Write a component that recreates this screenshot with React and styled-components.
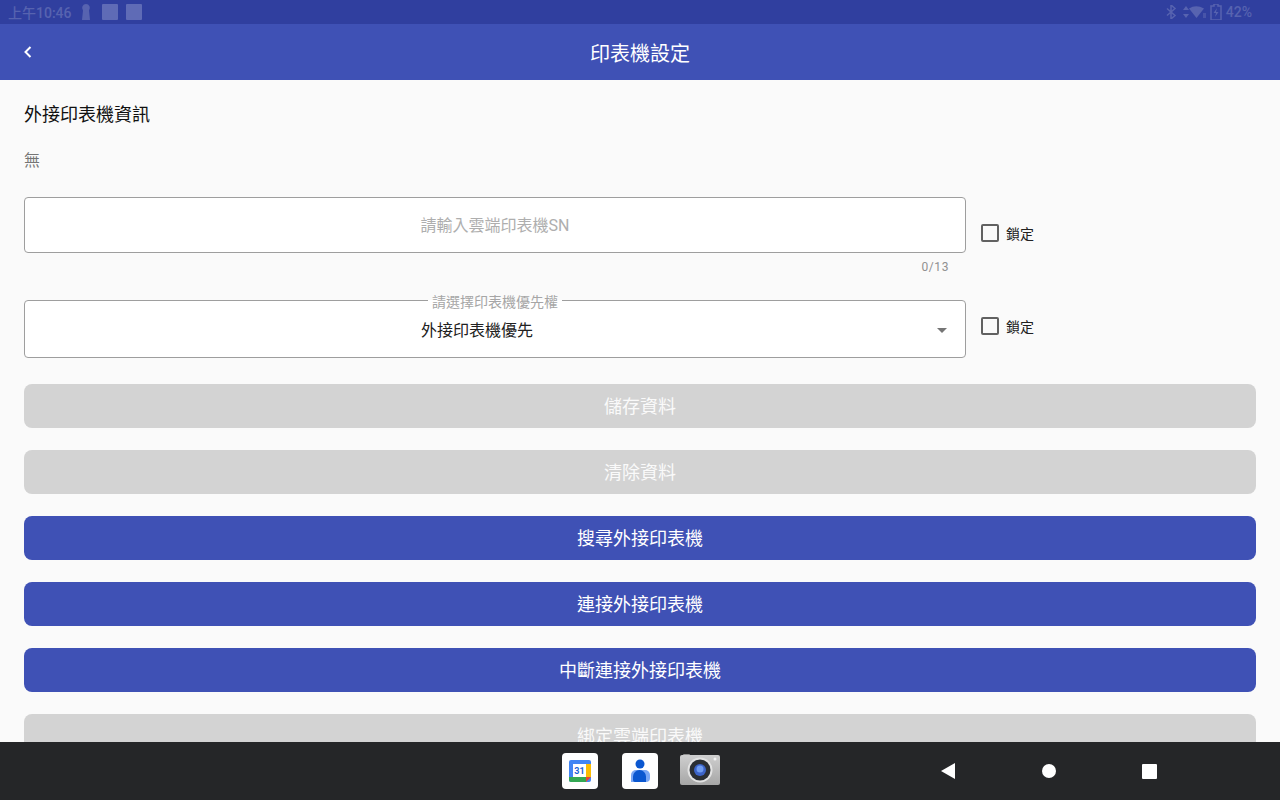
import React from 'react';
import styled, { createGlobalStyle } from 'styled-components';

const FONT = '"Roboto", "Noto Sans CJK TC", "Noto Sans", sans-serif';

const GlobalStyle = createGlobalStyle`
  html, body {
    margin: 0;
    padding: 0;
    width: 100%;
    height: 100%;
    overflow: hidden;
    font-family: ${FONT};
  }
  * {
    box-sizing: border-box;
  }
`;

const Screen = styled.div`
  width: 1280px;
  height: 800px;
  display: flex;
  flex-direction: column;
  overflow: hidden;
  background-color: #fafafa;
`;

const StatusBar = styled.div`
  height: 24px;
  flex-shrink: 0;
  display: flex;
  align-items: center;
  justify-content: space-between;
  padding: 0 28px 0 8px;
  background-color: #303f9f;
  color: #5763b0;
  font-size: 14px;
  font-weight: 500;
`;

const StatusGroup = styled.div`
  display: flex;
  align-items: center;
  gap: ${props => props.$gap || 0}px;
`;

const StatusSquare = styled.div`
  width: 16px;
  height: 16px;
  border-radius: 1px;
  background-color: #5f6bb6;
`;

const StatusIcon = styled.svg`
  margin-left: ${props => props.$left || 0}px;
  margin-right: ${props => props.$right || 0}px;
`;

const Battery = styled.span`
  margin-left: 4px;
  font-size: 14px;
`;

const Header = styled.header`
  position: relative;
  height: 56px;
  flex-shrink: 0;
  display: flex;
  align-items: center;
  justify-content: center;
  background-color: #3f51b5;
  color: #ffffff;
  font-size: 20px;
`;

const BackButton = styled.button`
  position: absolute;
  left: 22px;
  top: 21px;
  width: 12px;
  height: 14px;
  padding: 0;
  border: none;
  background: transparent;
  display: flex;
`;

const Content = styled.main`
  flex: 1;
  min-height: 0;
  overflow: hidden;
  padding: 0 24px;
  display: flex;
  flex-direction: column;
`;

const Title = styled.div`
  margin-top: 22px;
  height: 26px;
  line-height: 26px;
  font-size: 18px;
  color: #111111;
`;

const Value = styled.div`
  margin-top: 21px;
  height: 24px;
  line-height: 24px;
  font-size: 16px;
  color: #757575;
`;

const FieldRow = styled.div`
  display: flex;
  align-items: flex-start;
  margin-top: ${props => props.$top}px;
`;

const FieldBox = styled.div`
  position: relative;
  width: 942px;
  height: ${props => props.$height}px;
  padding-bottom: ${props => props.$muted ? 2 : 0}px;
  padding-right: ${props => props.$muted ? 0 : 36}px;
  display: flex;
  align-items: center;
  justify-content: center;
  background-color: #ffffff;
  border: 1px solid #9e9e9e;
  border-radius: 4px;
  font-size: 16px;
  color: ${props => props.$muted ? '#aeaeae' : '#212121'};
`;

const LegendLabel = styled.span`
  position: absolute;
  left: 403px;
  top: -7px;
  padding: 0 4px;
  line-height: 16px;
  font-size: 14px;
  color: #a6a6a6;
  background: linear-gradient(#fafafa 0 6px, #ffffff 6px);
`;

const Caret = styled.span`
  position: absolute;
  right: 18px;
  top: 27px;
  width: 0;
  height: 0;
  border-left: 5px solid transparent;
  border-right: 5px solid transparent;
  border-top: 5px solid #757575;
`;

const Counter = styled.div`
  width: 925px;
  height: 14px;
  margin-top: 7px;
  line-height: 14px;
  text-align: right;
  font-size: 12px;
  letter-spacing: 0.6px;
  color: #909090;
`;

const LockLabel = styled.label`
  display: flex;
  align-items: center;
  gap: 7px;
  margin-left: 15px;
  margin-top: ${props => props.$top}px;
  font-size: 14px;
  color: #212121;
`;

const CheckBox = styled.span`
  width: 18px;
  height: 18px;
  border: 2px solid #616161;
  border-radius: 2px;
`;

const ButtonStack = styled.div`
  margin-top: 26px;
  display: flex;
  flex-direction: column;
  gap: 22px;
  flex-shrink: 0;
`;

const ActionButton = styled.button`
  width: 100%;
  height: 44px;
  flex-shrink: 0;
  padding: 0 0 2px;
  border: none;
  border-radius: 8px;
  background-color: ${props => props.disabled ? '#d3d3d3' : '#3f51b5'};
  color: ${props => props.disabled ? '#fafafa' : '#ffffff'};
  font-family: ${FONT};
  font-size: 18px;
`;

const NavBar = styled.nav`
  position: relative;
  height: 58px;
  flex-shrink: 0;
  background-color: #252628;
`;

const Dock = styled.div`
  position: absolute;
  left: 562px;
  top: 11px;
  display: flex;
  gap: 24px;
  align-items: flex-start;
`;

const AppTile = styled.div`
  width: 36px;
  height: 36px;
  border-radius: 4px;
  background-color: #ffffff;
  display: flex;
  align-items: center;
  justify-content: center;
`;

const CameraSvg = styled.svg`
  margin-left: -2px;
  margin-top: 1px;
`;

const CalendarDay = styled.text`
  font-family: "Roboto", sans-serif;
  font-size: 9px;
  font-weight: 700;
  fill: #1a63d8;
`;

const NavButtons = styled.div`
  position: absolute;
  left: 940px;
  top: 20px;
  width: 217px;
  height: 18px;
  display: flex;
  align-items: center;
  justify-content: space-between;
`;

const NavCircle = styled.div`
  width: 14px;
  height: 14px;
  border-radius: 50%;
  background-color: #ffffff;
`;

const NavSquare = styled.div`
  width: 15px;
  height: 15px;
  border-radius: 1px;
  background-color: #ffffff;
`;

const CalendarIcon = () => (
  <svg width="22" height="22" viewBox="0 0 22 22">
    <rect x="0" y="0" width="22" height="22" rx="2" fill="#4285f4" />
    <rect x="4" y="4" width="13" height="13" fill="#ffffff" />
    <rect x="17" y="4" width="5" height="13" fill="#fbbc04" />
    <path d="M0 17h17v5H2a2 2 0 0 1-2-2z" fill="#34a853" />
    <path d="M17 17h5l-5 5z" fill="#ea4335" />
    <CalendarDay x="10.500" y="14" textAnchor="middle">31</CalendarDay>
  </svg>
);

const ContactIcon = () => (
  <svg width="20" height="24" viewBox="0 0 20 24">
    <circle cx="10" cy="5" r="4.500" fill="#0b57d0" />
    <path d="M6 11h9a5 5 0 0 1 5 5v3a4 4 0 0 1-4 4H1v-7a5 5 0 0 1 5-5z" fill="#7aa7f5" />
    <path d="M9.500 11a6.500 6.500 0 0 1 6.500 6.500V23H5a2 2 0 0 1-2-2v-3.500a6.500 6.500 0 0 1 6.500-6.500z" fill="#0b57d0" />
  </svg>
);

const CameraIcon = () => (
  <CameraSvg width="40" height="31" viewBox="0 0 40 31">
    <defs>
      <linearGradient id="cameraBody" x1="0" y1="0" x2="0" y2="1">
        <stop offset="0" stopColor="#cfcfcf" />
        <stop offset="1" stopColor="#a6a6a6" />
      </linearGradient>
    </defs>
    <rect x="3" y="0" width="7" height="3" rx="1" fill="#8f8f8f" />
    <rect x="0" y="1" width="40" height="30" rx="2" fill="url(#cameraBody)" />
    <circle cx="20" cy="16" r="12.500" fill="#e3e3e3" />
    <circle cx="20" cy="16" r="10.500" fill="#2b2f33" />
    <circle cx="20" cy="16" r="6" fill="#3c64c8" />
    <circle cx="20" cy="15" r="3.500" fill="#6f9cf0" />
    <circle cx="35" cy="5" r="1.500" fill="#f2f2f2" />
  </CameraSvg>
);

const App = () => {
  return (
    <Screen>
      <GlobalStyle />
      <StatusBar>
        <StatusGroup $gap={8}>
          <span>上午10:46</span>
          <StatusIcon $right={2} width="12" height="16" viewBox="0 0 12 16">
            <path d="M6 0a4 4 0 0 1 3 6.500L10 16H2l1-9.500A4 4 0 0 1 6 0z" fill="#5763b0" />
          </StatusIcon>
          <StatusSquare />
          <StatusSquare />
        </StatusGroup>
        <StatusGroup>
          <StatusIcon width="12" height="14" viewBox="0 0 12 14">
            <path d="M2 3.500l8 7L6 14V0l4 3.500-8 7" fill="none" stroke="#5763b0" strokeWidth="1.500" />
          </StatusIcon>
          <StatusIcon $left={6} width="6" height="12" viewBox="0 0 6 12">
            <path d="M3 0l3 4H0zM3 12L0 8h6z" fill="#5763b0" />
          </StatusIcon>
          <StatusIcon width="18" height="14" viewBox="0 0 18 14">
            <path d="M0 3.500Q7-1 15 3.500L7.500 13z" fill="#5763b0" />
            <path d="M14 8h3v5h-3z" fill="#5763b0" opacity="0.6" />
          </StatusIcon>
          <StatusIcon $left={3} width="12" height="16" viewBox="0 0 12 16">
            <path d="M4 0h4v2h3v14H1V2h3z" fill="none" stroke="#5763b0" strokeWidth="1.500" />
            <path d="M7 4L3.500 9H6l-1 4 3.500-5H6z" fill="#5763b0" />
          </StatusIcon>
          <Battery>42%</Battery>
        </StatusGroup>
      </StatusBar>

      <Header>
        <BackButton aria-label="back">
          <svg width="12" height="14" viewBox="0 0 12 14">
            <path d="M8.500 2L3.500 7l5 5" fill="none" stroke="#ffffff" strokeWidth="2" />
          </svg>
        </BackButton>
        印表機設定
      </Header>

      <Content>
        <Title>外接印表機資訊</Title>
        <Value>無</Value>

        <FieldRow $top={24}>
          <FieldBox $height={56} $muted>請輸入雲端印表機SN</FieldBox>
          <LockLabel $top={26}>
            <CheckBox />
            鎖定
          </LockLabel>
        </FieldRow>
        <Counter>0/13</Counter>

        <FieldRow $top={26}>
          <FieldBox $height={58}>
            <LegendLabel>請選擇印表機優先權</LegendLabel>
            外接印表機優先
            <Caret />
          </FieldBox>
          <LockLabel $top={16}>
            <CheckBox />
            鎖定
          </LockLabel>
        </FieldRow>

        <ButtonStack>
          <ActionButton disabled>儲存資料</ActionButton>
          <ActionButton disabled>清除資料</ActionButton>
          <ActionButton>搜尋外接印表機</ActionButton>
          <ActionButton>連接外接印表機</ActionButton>
          <ActionButton>中斷連接外接印表機</ActionButton>
          <ActionButton disabled>綁定雲端印表機</ActionButton>
        </ButtonStack>
      </Content>

      <NavBar>
        <Dock>
          <AppTile><CalendarIcon /></AppTile>
          <AppTile><ContactIcon /></AppTile>
          <CameraIcon />
        </Dock>
        <NavButtons>
          <svg width="15" height="18" viewBox="0 0 15 18">
            <path d="M15 1v16L1 9z" fill="#ffffff" />
          </svg>
          <NavCircle />
          <NavSquare />
        </NavButtons>
      </NavBar>
    </Screen>
  );
};

export default App;
